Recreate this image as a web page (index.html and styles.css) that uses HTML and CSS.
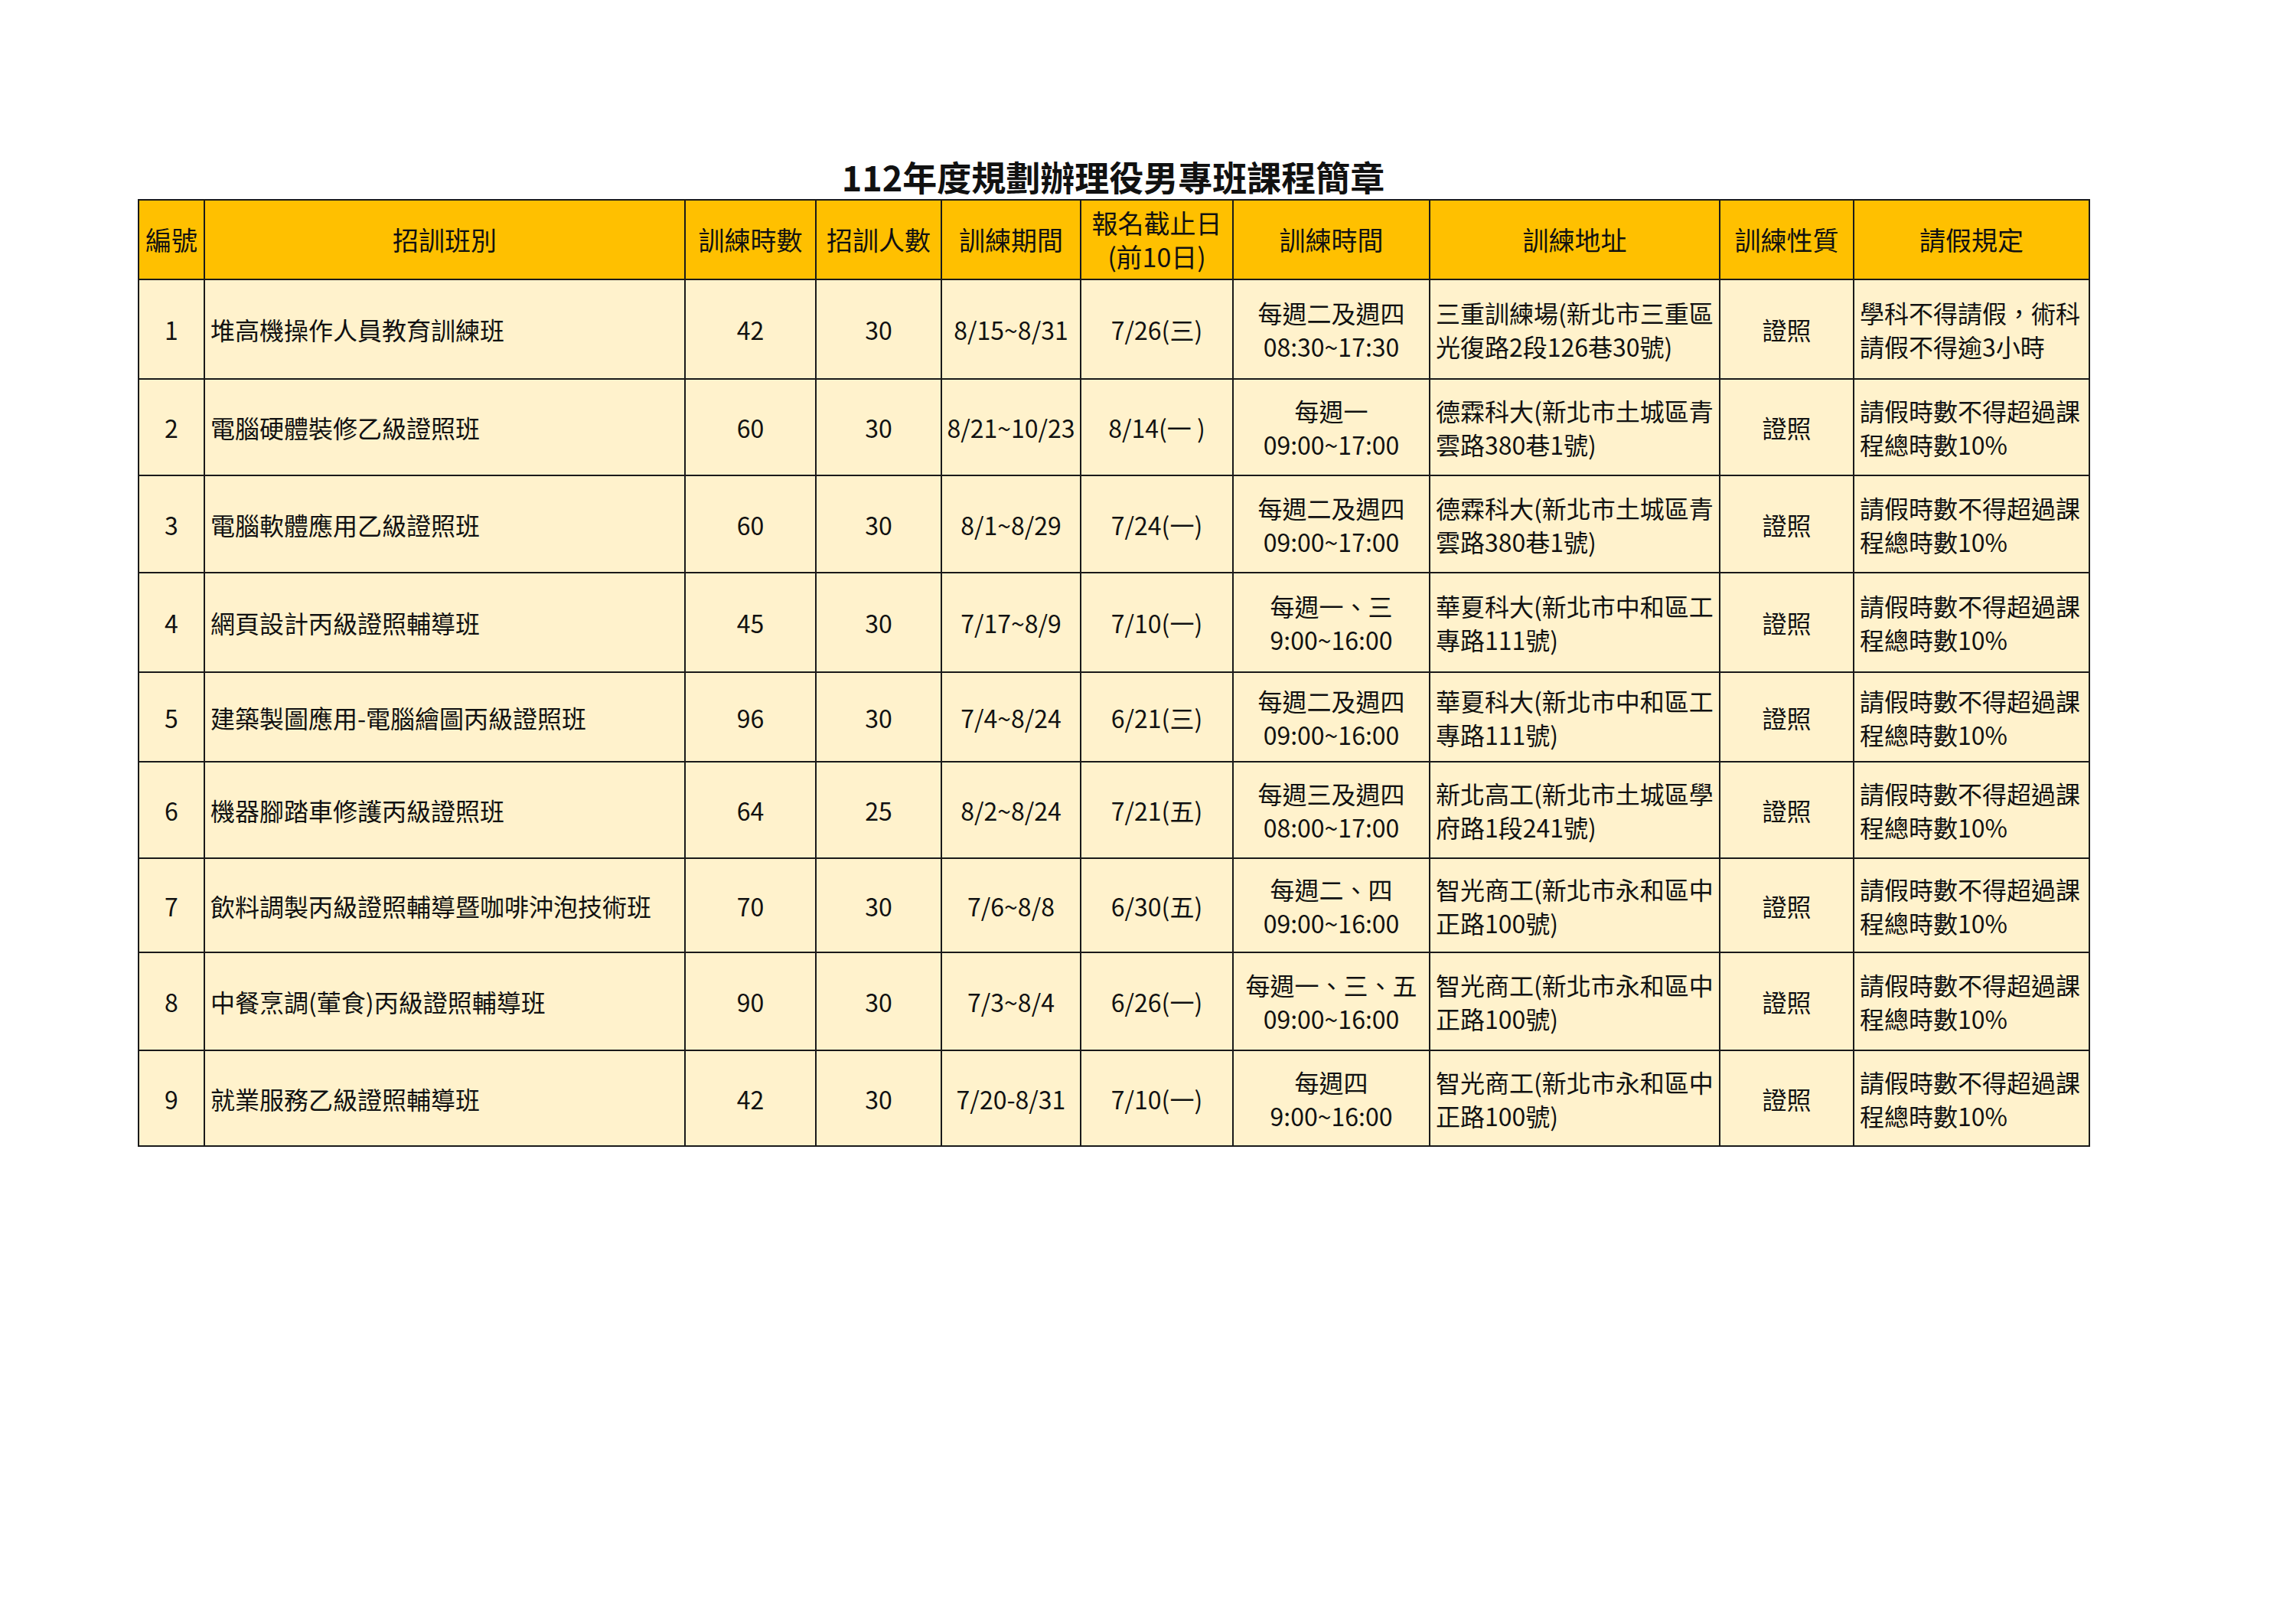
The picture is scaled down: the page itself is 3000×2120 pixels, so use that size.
FILE: index.html
```html
<!DOCTYPE html>
<html lang="zh-Hant">
<head>
<meta charset="utf-8">
<title>112年度規劃辦理役男專班課程簡章</title>
<link rel="stylesheet" href="styles.css">
</head>
<body>
<div class="page">
  <h1 class="title">112年度規劃辦理役男專班課程簡章</h1>
  <table class="sheet">
    <colgroup>
      <col class="c-no"><col class="c-name"><col class="c-hours"><col class="c-people"><col class="c-period">
      <col class="c-deadline"><col class="c-time"><col class="c-addr"><col class="c-type"><col class="c-rule">
    </colgroup>
    <thead>
      <tr class="h-head">
        <th>編號</th><th>招訓班別</th><th>訓練時數</th><th>招訓人數</th><th>訓練期間</th>
        <th>報名截止日<br>(前10日)</th><th>訓練時間</th><th>訓練地址</th><th>訓練性質</th><th>請假規定</th>
      </tr>
    </thead>
    <tbody>
      <tr class="h-130">
        <td>1</td><td class="left">堆高機操作人員教育訓練班</td><td>42</td><td>30</td><td>8/15~8/31</td><td>7/26(三)</td>
        <td>每週二及週四<br>08:30~17:30</td><td class="left">三重訓練場(新北市三重區<br>光復路2段126巷30號)</td><td>證照</td>
        <td class="left">學科不得請假，術科<br>請假不得逾3小時</td>
      </tr>
      <tr class="h-126">
        <td>2</td><td class="left">電腦硬體裝修乙級證照班</td><td>60</td><td>30</td><td>8/21~10/23</td><td>8/14(一 )</td>
        <td>每週一<br>09:00~17:00</td><td class="left">德霖科大(新北市土城區青<br>雲路380巷1號)</td><td>證照</td>
        <td class="left">請假時數不得超過課<br>程總時數10%</td>
      </tr>
      <tr class="h-127">
        <td>3</td><td class="left">電腦軟體應用乙級證照班</td><td>60</td><td>30</td><td>8/1~8/29</td><td>7/24(一)</td>
        <td>每週二及週四<br>09:00~17:00</td><td class="left">德霖科大(新北市土城區青<br>雲路380巷1號)</td><td>證照</td>
        <td class="left">請假時數不得超過課<br>程總時數10%</td>
      </tr>
      <tr class="h-130">
        <td>4</td><td class="left">網頁設計丙級證照輔導班</td><td>45</td><td>30</td><td>7/17~8/9</td><td>7/10(一)</td>
        <td>每週一、三<br>9:00~16:00</td><td class="left">華夏科大(新北市中和區工<br>專路111號)</td><td>證照</td>
        <td class="left">請假時數不得超過課<br>程總時數10%</td>
      </tr>
      <tr class="h-117">
        <td>5</td><td class="left">建築製圖應用-電腦繪圖丙級證照班</td><td>96</td><td>30</td><td>7/4~8/24</td><td>6/21(三)</td>
        <td>每週二及週四<br>09:00~16:00</td><td class="left">華夏科大(新北市中和區工<br>專路111號)</td><td>證照</td>
        <td class="left">請假時數不得超過課<br>程總時數10%</td>
      </tr>
      <tr class="h-126">
        <td>6</td><td class="left">機器腳踏車修護丙級證照班</td><td>64</td><td>25</td><td>8/2~8/24</td><td>7/21(五)</td>
        <td>每週三及週四<br>08:00~17:00</td><td class="left">新北高工(新北市土城區學<br>府路1段241號)</td><td>證照</td>
        <td class="left">請假時數不得超過課<br>程總時數10%</td>
      </tr>
      <tr class="h-123">
        <td>7</td><td class="left">飲料調製丙級證照輔導暨咖啡沖泡技術班</td><td>70</td><td>30</td><td>7/6~8/8</td><td>6/30(五)</td>
        <td>每週二、四<br>09:00~16:00</td><td class="left">智光商工(新北市永和區中<br>正路100號)</td><td>證照</td>
        <td class="left">請假時數不得超過課<br>程總時數10%</td>
      </tr>
      <tr class="h-128">
        <td>8</td><td class="left">中餐烹調(葷食)丙級證照輔導班</td><td>90</td><td>30</td><td>7/3~8/4</td><td>6/26(一)</td>
        <td>每週一、三、五<br>09:00~16:00</td><td class="left">智光商工(新北市永和區中<br>正路100號)</td><td>證照</td>
        <td class="left">請假時數不得超過課<br>程總時數10%</td>
      </tr>
      <tr class="h-125">
        <td>9</td><td class="left">就業服務乙級證照輔導班</td><td>42</td><td>30</td><td>7/20-8/31</td><td>7/10(一)</td>
        <td>每週四<br>9:00~16:00</td><td class="left">智光商工(新北市永和區中<br>正路100號)</td><td>證照</td>
        <td class="left">請假時數不得超過課<br>程總時數10%</td>
      </tr>
    </tbody>
  </table>
</div>
</body>
</html>
```

FILE: styles.css
```css
html, body {
  margin: 0;
  padding: 0;
  background: #ffffff;
}

body {
  font-family: "Noto Sans CJK TC", "Noto Sans CJK SC", "Noto Sans", sans-serif;
  color: #111;
}

.page {
  padding: 202px 0 0 180px;
  width: 2549px;
}

.title {
  margin: 0;
  height: 58px;
  line-height: 58px;
  font-size: 45px;
  font-weight: 700;
  text-align: center;
  color: #111;
}

.sheet {
  border-collapse: collapse;
  table-layout: fixed;
  width: 2549px;
  font-size: 32px;
  line-height: 44px;
}

.sheet th,
.sheet td {
  border: 2px solid #1a1a1a;
  padding: 0 4px;
  text-align: center;
  vertical-align: middle;
  font-weight: 400;
  white-space: nowrap;
}

.sheet th {
  background: #ffc000;
  font-size: 34px;
}

.sheet td {
  background: #fff2cc;
}

.sheet td.left {
  text-align: left;
  padding-left: 7px;
}

.c-no { width: 86px; }
.c-name { width: 628px; }
.c-hours { width: 171px; }
.c-people { width: 164px; }
.c-period { width: 182px; }
.c-deadline { width: 199px; }
.c-time { width: 257px; }
.c-addr { width: 379px; }
.c-type { width: 175px; }
.c-rule { width: 308px; }

.h-head { height: 104px; }
.h-130 { height: 130px; }
.h-126 { height: 126px; }
.h-127 { height: 127px; }
.h-117 { height: 117px; }
.h-123 { height: 123px; }
.h-128 { height: 128px; }
.h-125 { height: 125px; }
```
